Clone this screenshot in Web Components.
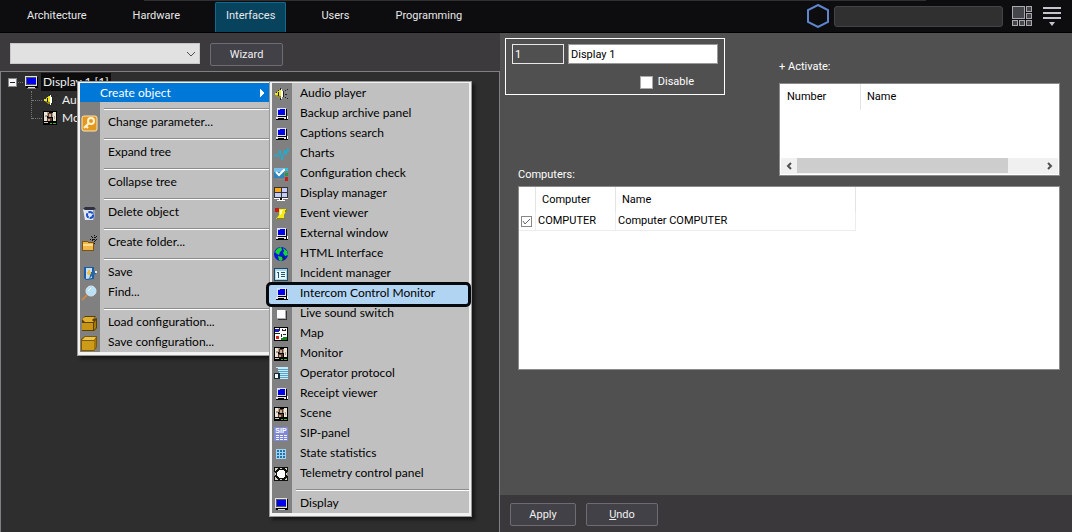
<!DOCTYPE html>
<html lang="en">
<head>
<meta charset="utf-8">
<title>Interfaces</title>
<style>
  html, body {
    height: 100%;
    margin: 0;
  }

  body {
    background: #505050;
    overflow: hidden;
  }
</style>
</head>
<body>
<settings-app></settings-app>

<script>
// 16x16 pixel icons, drawn in SVG user units
const pc = `
  <path fill="#e4e4f4" d="M4 2h9v8h-9zM3 11h10v2h-10z"/>
  <path fill="#0000e8" d="M5 3h7v6h-7z"/>
  <path fill="#9cf" d="M5 3h2v1h-2z"/>
  <path fill="#000" d="M13 3h1v8h-9v-1h8zM3 13h12v1h-12zM13 11h1v2h-1zM5 12h6v1h-6z"/>
  <path fill="#fff" d="M14 10h1v3h-1z"/>`;

const photo = `
  <path fill="#000" d="M1 1h14v14h-14z"/>
  <path fill="#ece4d4" d="M2 2h3v9h-3zM11 2h3v9h-3z"/>
  <path fill="#a8a090" d="M5 2h2v4h-2zM10 3h1v4h-1zM3 5h2v2h-2zM12 6h1v3h-1z"/>
  <path fill="#5c3a2c" d="M6 3h4v4h-4zM5 8h5v3h-5z"/>
  <path fill="#d0a890" d="M7 4h2v3h-2zM6 9h2v2h-2z"/>
  <path fill="#c8c8b8" d="M2 12h4v1h-4z"/>
  <path fill="#48b020" d="M8 13h2v1h-2zM11 13h3v1h-3z"/>`;

const icons = {
  pc,
  photo,
  display: `
    <path fill="#000" d="M3 3h12v11h-12z"/>
    <path fill="#e0e0ec" d="M2 2h12v10h-12z"/>
    <path fill="#555" d="M3 3h10v8h-10z"/>
    <path fill="#0000e8" d="M4 4h9v6h-9z"/>
    <path fill="#ddd" d="M5 13h7v1h-7z"/>
    <path fill="#777" d="M4 14h9v1h-9z"/>`,
  speaker: `
    <path fill="#eee820" d="M2 7h1l5-4v10l-5-4h-1z" shape-rendering="auto"/>
    <path fill="#88801c" d="M3 9l5 4v-3z" shape-rendering="auto"/>
    <path fill="#fff" d="M8 3h1v2h1v6h-1v2h-1z"/>
    <path fill="#222" d="M7 2h1v2h-1zM5 4h1v1h-1zM3 6h1v1h-1zM5 6h1v4h-1zM7 12h1v2h-1zM10 5h1v6h-1zM12 4h1v1h-1zM14 3h1v1h-1zM12 8h2v1h-2zM12 11h1v1h-1zM14 12h1v1h-1z"/>`,
  charts: `<path fill="none" stroke="#10b4e0" d="M1 11l2-3 2 3 2-7 2 10 3-10 1 5 2-7v4" shape-rendering="auto"/>`,
  check: `
    <path fill="#2a86bc" d="M1 2h10v10h-10z"/>
    <path fill="#73bde8" d="M1 2h10v4h-10z"/>
    <path fill="none" stroke="#fff" stroke-width="2" d="M3 6l3 3 6-6" shape-rendering="auto"/>
    <path fill="#20c8e8" d="M12 2h3v3h-3z"/>
    <path fill="#18a048" d="M12 7h3v3h-3z"/>
    <path fill="#c42020" d="M12 11h3v4h-3z"/>
    <path fill="#888" d="M4 13h7v1h-7z"/>`,
  wall: `
    <path fill="#333" d="M1 1h14v11h-14z"/>
    <path fill="#f8a818" d="M2 2h6v4h-6z"/>
    <path fill="#c4ccfc" d="M9 2h5v4h-5zM2 7h6v4h-6zM9 7h5v4h-5z"/>
    <path fill="#fff" d="M1 12h14v1h-14zM6 13h4v1h-4zM4 14h8v1h-8z"/>
    <path fill="#111" d="M7 12h2v2h-2z"/>`,
  scroll: `
    <path fill="#c81818" d="M2 2h4v4h-4z"/>
    <path fill="#f4ec10" d="M6 3h8l-3 6v4h-8l3-4z" shape-rendering="auto"/>
    <path fill="#8c8400" d="M13 3h1v3h-2zM4 12h8v1h-8z"/>
    <path fill="#fffcb0" d="M7 4h3l-2 5h-1z"/>`,
  globe: `
    <g shape-rendering="auto"><circle cx="8" cy="8" r="7" fill="#0818d8"/>
    <path fill="#18d830" d="M4 3l4-2 1 3-2 2-1 3-2-1-2-2zM10 2l4 3 1 4-3 1-2-3 1-2zM5 10l4 1 1 2-2 2-2-1z"/>
    <path fill="#0a2c20" d="M9 10l2 1 1 2-2 1z"/></g>`,
  incident: `
    <path fill="#20485c" d="M1 2h14v13h-14z"/>
    <path fill="#a8d4ec" d="M2 3h12v11h-12z"/>
    <path fill="#e8f8fc" d="M3 5h10v8h-10z"/>
    <path fill="#245468" d="M4 6h2v6h-1v-5h-1zM8 6h4v1h-4zM8 8h4v1h-4zM8 10h4v1h-4z"/>`,
  sound: `
    <path fill="#333" d="M5 5h9v9h-9z"/>
    <path fill="#fff" d="M4 4h8v8h-8z"/>
    <path fill="#aaa" d="M12 4h1v9h-9v-1h8z"/>`,
  map: `
    <path fill="#000" d="M1 1h14v14h-14z"/>
    <path fill="#fff" d="M2 2h12v12h-12z"/>
    <path fill="#1818d8" d="M2 3h4v3h-4z"/>
    <path fill="#e02020" d="M3 10h3v3h-3z"/>
    <path fill="#108020" d="M10 11h4v3h-6v-2h2z"/>
    <path fill="#222" d="M6 2h1v3h-1zM9 3h1v1h2v-1h1v2h-4zM2 7h5v1h-5zM8 8h1v3h-1zM10 8h3v1h-3z"/>`,
  protocol: `
    <path fill="#c4ecfc" d="M3 1h12v2h-10v-1h-2zM5 4h10v1h-10zM6 6h9v1h-9zM6 8h9v1h-9zM6 10h9v1h-9zM6 12h9v1h-9z"/>
    <path fill="#58a4c4" d="M5 3h10v1h-10zM6 5h9v1h-9zM6 7h9v1h-9zM6 9h9v1h-9zM6 11h9v1h-9z"/>
    <path fill="#102c3c" d="M1 7h6v6h-6z"/>
    <path fill="#fff" d="M2 8h3v4h-3z"/>`,
  sip: `
    <path fill="#8088d8" d="M1 1h14v14h-14z"/>
    <path fill="#f4f4ff" d="M3 9h3v1h-3zM7 9h3v1h-3zM11 9h3v1h-3zM3 11h3v1h-3zM7 11h3v1h-3zM11 11h3v1h-3zM3 13h3v1h-3zM7 13h3v1h-3zM11 13h3v1h-3z"/>
    <text x="8" y="7" fill="#fff" font-family="Liberation Sans, sans-serif" font-weight="bold" font-size="7" text-anchor="middle">SIP</text>`,
  stats: `
    <path fill="#a4d4f4" d="M3 3h10v10h-10z"/>
    <path fill="#2474ac" d="M4 4h2v2h-2zM7 4h2v2h-2zM10 4h2v2h-2zM4 7h2v2h-2zM7 7h2v2h-2zM10 7h2v2h-2zM4 10h2v2h-2zM7 10h2v2h-2zM10 10h2v2h-2z"/>`,
  telemetry: `
    <path fill="#111" d="M1 1h14v14h-14z"/>
    <path fill="#d8d8c0" d="M2 2h3l-3 3zM14 2h-3l3 3zM2 14h3l-3-3zM14 14h-3l3-3zM7 2h2v1h-2zM7 13h2v1h-2zM2 7h1v2h-1zM13 7h1v2h-1z"/>
    <path fill="#888" d="M1 6h1v4h-1zM14 6h1v4h-1z"/>
    <path fill="#fff" d="M6 4h4l2 2v4l-2 2h-4l-2-2v-4z"/>`,
  key: `
    <g shape-rendering="auto"><rect x="1" y="1" width="15" height="15" rx="2" fill="#e49820" stroke="#fbe3b0"/>
    <circle cx="10" cy="6" r="3" fill="none" stroke="#fff3d0" stroke-width="2"/>
    <path fill="none" stroke="#fff3d0" stroke-width="2" d="M8 8l-5 5M5 11l2 2"/></g>`,
  bin: `
    <g shape-rendering="auto"><path fill="#e4e8f0" d="M2 4h12l-1 11h-9z"/>
    <path fill="#303040" d="M2 4l2-2h9l2 2-2 1h-9z"/>
    <path fill="#989cac" d="M12 5h2l-1 10h-1z"/>
    <circle cx="9" cy="10" r="3" fill="none" stroke="#1450d0" stroke-width="2" stroke-dasharray="5 1"/></g>`,
  folder: `
    <path fill="#7c5410" d="M1 6h5l1 1h6v9h-12z"/>
    <path fill="#f0b848" d="M2 7h4l1 1h5v7h-10z"/>
    <path fill="#fcdc88" d="M2 9h10v2h-10z"/>
    <path stroke="#111" stroke-dasharray="1 1" d="M13 0v9M9 4h8M10 1l6 6M16 1l-6 6"/>`,
  save: `
    <g shape-rendering="auto"><path fill="#1c5ca4" d="M3 2h10v12l-8 1-2-2z"/>
    <path fill="#c4e0f8" d="M5 3h6v10l-6 1z"/>
    <path fill="#2868a8" d="M10 7l5-1v3l-4 2-3 3z"/>
    <path stroke="#f0c040" stroke-width="2" d="M8 5v5M6 8h4"/>
    <path fill="#e0e4ec" d="M14 6h2v2h-2z"/></g>`,
  find: `
    <g shape-rendering="auto"><path stroke="#c88848" stroke-width="2" d="M1 15l6-6"/>
    <circle cx="10" cy="6" r="5" fill="#b8e0f8" stroke="#d8e4ec"/>
    <path fill="none" stroke="#fff" d="M7 6l3-3"/></g>`,
  open: `
    <g shape-rendering="auto"><path fill="#5c4000" d="M1 4l3-3h11l-2 3 3-1v10l-3 3h-12z"/>
    <path fill="#c89414" d="M1 8h11v7h-11z"/>
    <path fill="#a87808" d="M13 8l2-3v8l-2 2z"/>
    <path fill="#e0b030" d="M1 4l3-2h10l-3 3 2 2h-9z"/></g>`,
  box: `
    <g shape-rendering="auto"><path fill="#7c5800" d="M0 4l4-3h12v11l-3 4h-13z"/>
    <path fill="#cc9c18" d="M1 6h12v9h-12z"/>
    <path fill="#e8c450" d="M1 5l3-3h11l-2 3z"/>
    <path fill="#a47808" d="M13 6l2-3v9l-2 3z"/></g>`,
  chevron: `<path fill="none" stroke="#505050" d="M4 6l4 4 4-4" shape-rendering="auto"/>`,
  left: `<path fill="none" stroke="#505050" stroke-width="2" d="M10 5l-3 3 3 3" shape-rendering="auto"/>`,
  right: `<path fill="none" stroke="#505050" stroke-width="2" d="M6 5l3 3-3 3" shape-rendering="auto"/>`,
  arrow: `<path fill="#fff" d="M7 4l4 4-4 4z"/>`,
};

function define(name, html, setup) {
  const template = document.createElement('template');
  template.innerHTML = html;

  customElements.define(name, class extends HTMLElement {
    connectedCallback() {
      if (this.shadowRoot) {
        return;
      }
      this.attachShadow({ mode: 'open' });
      this.shadowRoot.appendChild(template.content.cloneNode(true));
      if (setup) {
        setup(this, this.shadowRoot);
      }
    }
  });
}

function createIcon(name) {
  const icon = document.createElement('pixel-icon');
  icon.setAttribute('name', name);
  return icon;
}

define('pixel-icon', `
  <style>
    :host {
      display: block;
      flex: none;
      width: 16px;
      height: 16px;
    }

    svg {
      display: block;
      overflow: visible;
    }
  </style>
  <svg width="16" height="16" viewBox="0 0 16 16" shape-rendering="crispEdges" aria-hidden="true"></svg>
`, (host, root) => {
  root.querySelector('svg').innerHTML = icons[host.getAttribute('name')];
});

define('nav-tab', `
  <style>
    :host {
      display: flex;
    }

    button {
      padding: 0 10px 4px;
      border: 1px solid transparent;
      border-bottom: 0;
      border-radius: 2px 2px 0 0;
      background: none;
      color: #e8e8e8;
      font: inherit;
    }

    :host([active]) button {
      background: #08435e;
      border-color: #126a90;
    }
  </style>
  <button type="button"><slot></slot></button>
`);

define('app-header', `
  <style>
    :host {
      display: flex;
      align-items: stretch;
      justify-content: space-between;
      height: 33px;
      box-sizing: border-box;
      border-bottom: 1px solid #000;
      background: linear-gradient(#303033, #303033) 144px 0 / 782px 1px no-repeat #0d0d10;
    }

    nav {
      display: flex;
      gap: 24px;
      padding: 2px 0 0 16px;
    }

    .tools {
      display: flex;
      align-items: center;
      padding-right: 10px;
    }

    input {
      width: 169px;
      height: 21px;
      box-sizing: border-box;
      margin: 0 9px 0 5px;
      border: 1px solid #444448;
      border-radius: 3px;
      background: #303030;
      color: #ddd;
      font: inherit;
    }

    button {
      display: block;
      padding: 0;
      border: 0;
      background: none;
    }

    button + button {
      margin-left: 10px;
    }

    svg {
      display: block;
    }
  </style>
  <nav>
    <nav-tab>Architecture</nav-tab>
    <nav-tab>Hardware</nav-tab>
    <nav-tab active>Interfaces</nav-tab>
    <nav-tab>Users</nav-tab>
    <nav-tab>Programming</nav-tab>
  </nav>
  <div class="tools">
    <svg width="22" height="24" viewBox="0 0 22 24" fill="none" stroke="#5f86cc" stroke-width="2"><path d="M11 1l10 5v12l-10 5-10-5v-12z"/></svg>
    <input type="text" aria-label="Search">
    <button type="button" aria-label="Layout">
      <svg width="20" height="20" viewBox="0 0 20 20">
        <path fill="#a8a8ac" d="M0 0h13v13h-13zM14 0h6v6h-6zM14 7h6v6h-6zM0 14h6v6h-6zM7 14h6v6h-6zM14 14h6v6h-6z"/>
        <path fill="#45454c" d="M1 1h11v11h-11zM15 1h4v4h-4zM15 8h4v4h-4zM1 15h4v4h-4zM8 15h4v4h-4zM15 15h4v4h-4z"/>
      </svg>
    </button>
    <button type="button" aria-label="Menu">
      <svg width="20" height="20" viewBox="0 0 20 20" fill="#c4c4cc"><path d="M1 1h18v2h-18zM1 6h18v2h-18zM1 11h18v2h-18zM7 16h6l-3 4z"/></svg>
    </button>
  </div>
`);

define('push-button', `
  <style>
    :host {
      display: block;
    }

    button {
      width: 100%;
      height: 23px;
      padding: 0;
      border: 1px solid #6c6c72;
      border-radius: 2px;
      background: #424147;
      color: #f0f0f0;
      font: inherit;
    }
  </style>
  <button type="button"><slot></slot></button>
`);

define('tree-node', `
  <style>
    :host {
      display: block;
      color: #f0f0f0;
      font: 12px/18px Lato, sans-serif;
    }

    .row {
      display: flex;
      align-items: center;
      height: 18px;
    }

    .toggle {
      display: none;
      width: 9px;
      height: 9px;
      box-sizing: border-box;
      margin-right: 1px;
      padding: 0;
      border: 1px solid #888;
      background: linear-gradient(#223, #223) center / 5px 1px no-repeat #f4f4f4;
    }

    .line {
      width: 10px;
      border-top: 1px dotted #777;
    }

    .label {
      margin-left: 2px;
      padding: 0 2px;
      white-space: nowrap;
    }

    :host([open]) .toggle {
      display: block;
    }

    :host([open]) .line {
      width: 5px;
    }

    :host([open]) .label {
      background: #0c0c0c;
    }

    .children {
      height: 28px;
      margin-left: 23px;
      border-left: 1px dotted #777;
    }

    :host(:not([open])) .children {
      display: none;
    }
  </style>
  <div class="row">
    <button type="button" class="toggle" aria-label="Collapse"></button>
    <span class="line"></span>
    <span class="label"></span>
  </div>
  <div class="children"><slot></slot></div>
`, (host, root) => {
  const label = root.querySelector('.label');
  label.textContent = host.getAttribute('label');
  label.before(createIcon(host.getAttribute('icon')));
});

define('menu-item', `
  <style>
    :host {
      display: block;
      position: relative;
    }

    button {
      display: flex;
      width: 100%;
      height: 20px;
      padding: 0;
      border: 0;
      background: none;
      color: #000;
      font: inherit;
      text-align: left;
      white-space: nowrap;
    }

    pixel-icon {
      padding: 3px 3px 0 1px;
    }

    .label {
      flex: 1;
      padding-left: 8px;
    }

    .blank {
      width: 20px;
    }

    :host([expanded]) button {
      height: 19px;
      background: #0078d7;
      color: #fff;
    }

    :host([expanded]) .label {
      padding-left: 0;
    }

    :host([expanded]) pixel-icon {
      padding: 2px 0 0;
    }

    /* ring around the item reaches past the menu edges */
    :host([marked])::before {
      content: "";
      position: absolute;
      inset: -1px -2px -4px -6px;
      border: 3px solid #05080c;
      border-radius: 5px;
      background: #b0d4f2;
    }

    :host([marked]) button {
      position: relative;
    }
  </style>
  <button type="button" role="menuitem"><span class="label"><slot></slot></span></button>
`, (host, root) => {
  const button = root.querySelector('button');
  if (host.hasAttribute('icon')) {
    button.prepend(createIcon(host.getAttribute('icon')));
  } else {
    const blank = document.createElement('span');
    blank.className = 'blank';
    button.prepend(blank);
  }

  if (host.hasAttribute('expanded')) {
    button.append(createIcon('arrow'));
  }
});

define('menu-separator', `
  <style>
    :host {
      display: block;
      height: 10px;
      box-sizing: border-box;
      padding: 6px 0 0 24px;
    }

    div {
      height: 1px;
      border-top: 1px solid #8c8c8c;
      background: #fff;
    }
  </style>
  <div></div>
`);

define('popup-menu', `
  <style>
    :host {
      display: block;
      position: absolute;
      box-sizing: border-box;
      padding: 0 1px 2px 0;
      border: 1px solid #999;
      box-shadow: inset 0 0 0 2px #f2f2f2, 3px 3px 3px #181818;
      background: #f2f2f2;
      font: 12px/20px Lato, sans-serif;
    }

    div {
      margin: 1px 1px 1px 2px;
      background: linear-gradient(90deg, #808080 20px, #c0c0c0 20px);
    }
  </style>
  <div role="menu"><slot></slot></div>
`);

define('object-tree', `
  <style>
    :host {
      display: flex;
      flex-direction: column;
      position: relative;
      background: #3c3a3c;
    }

    .bar {
      display: flex;
      gap: 10px;
      padding: 10px 10px 5px;
    }

    .combo {
      display: grid;
      width: 190px;
      height: 21px;
    }

    .combo > * {
      grid-area: 1 / 1;
    }

    select {
      appearance: none;
      border: 1px solid #c8c8c8;
      background: #e1e1e1;
      font: inherit;
    }

    .combo pixel-icon {
      justify-self: end;
      align-self: center;
      margin-right: 1px;
      pointer-events: none;
    }

    push-button {
      width: 73px;
    }

    .tree {
      flex: 1;
      border: 1px solid #808084;
      border-bottom: 0;
      padding: 1px 0 0 7px;
      background: #2e2e2e;
    }

    .context {
      top: 48px;
      left: 77px;
      width: 195px;
    }

    .submenu {
      top: 48px;
      left: 269px;
      width: 203px;
    }
  </style>
  <div class="bar">
    <div class="combo">
      <select aria-label="Object type"><option></option></select>
      <pixel-icon name="chevron"></pixel-icon>
    </div>
    <push-button>Wizard</push-button>
  </div>
  <div class="tree">
    <tree-node open icon="display" label="Display 1 [1]">
      <tree-node icon="speaker" label="Au"></tree-node>
      <tree-node icon="photo" label="Mo"></tree-node>
    </tree-node>
  </div>
  <popup-menu class="context">
    <menu-item expanded>Create object</menu-item>
    <menu-separator></menu-separator>
    <menu-item icon="key">Change parameter...</menu-item>
    <menu-separator></menu-separator>
    <menu-item>Expand tree</menu-item>
    <menu-separator></menu-separator>
    <menu-item>Collapse tree</menu-item>
    <menu-separator></menu-separator>
    <menu-item icon="bin">Delete object</menu-item>
    <menu-separator></menu-separator>
    <menu-item icon="folder">Create folder...</menu-item>
    <menu-separator></menu-separator>
    <menu-item icon="save">Save</menu-item>
    <menu-item icon="find">Find...</menu-item>
    <menu-separator></menu-separator>
    <menu-item icon="open">Load configuration...</menu-item>
    <menu-item icon="box">Save configuration...</menu-item>
  </popup-menu>
  <popup-menu class="submenu">
    <menu-item icon="speaker">Audio player</menu-item>
    <menu-item icon="pc">Backup archive panel</menu-item>
    <menu-item icon="pc">Captions search</menu-item>
    <menu-item icon="charts">Charts</menu-item>
    <menu-item icon="check">Configuration check</menu-item>
    <menu-item icon="wall">Display manager</menu-item>
    <menu-item icon="scroll">Event viewer</menu-item>
    <menu-item icon="pc">External window</menu-item>
    <menu-item icon="globe">HTML Interface</menu-item>
    <menu-item icon="incident">Incident manager</menu-item>
    <menu-item icon="pc" marked>Intercom Control Monitor</menu-item>
    <menu-item icon="sound">Live sound switch</menu-item>
    <menu-item icon="map">Map</menu-item>
    <menu-item icon="photo">Monitor</menu-item>
    <menu-item icon="protocol">Operator protocol</menu-item>
    <menu-item icon="pc">Receipt viewer</menu-item>
    <menu-item icon="photo">Scene</menu-item>
    <menu-item icon="sip">SIP-panel</menu-item>
    <menu-item icon="stats">State statistics</menu-item>
    <menu-item icon="telemetry">Telemetry control panel</menu-item>
    <menu-separator></menu-separator>
    <menu-item icon="display">Display</menu-item>
  </popup-menu>
`);

define('list-box', `
  <style>
    :host {
      display: flex;
      flex-direction: column;
      justify-content: space-between;
      box-sizing: border-box;
      border: 1px solid #8a8a8a;
      background: #fff;
      color: #000;
    }

    .scroll {
      display: none;
      margin: 0 1px 1px;
      height: 16px;
      background: #f0f0f0;
    }

    :host([scroll]) .scroll {
      display: flex;
    }

    .track {
      flex: 1;
    }

    .thumb {
      width: 86%;
      height: 15px;
      background: #cdcdcd;
    }

    button {
      padding: 0;
      border: 0;
      background: none;
    }
  </style>
  <slot></slot>
  <div class="scroll">
    <button type="button" aria-label="Scroll left"><pixel-icon name="left"></pixel-icon></button>
    <div class="track"><div class="thumb"></div></div>
    <button type="button" aria-label="Scroll right"><pixel-icon name="right"></pixel-icon></button>
  </div>
`);

define('object-form', `
  <style>
    :host {
      display: flex;
      flex-direction: column;
      min-width: 0;
      background: #505050;
      color: #fff;
    }

    .top {
      display: grid;
      grid-template-columns: 1fr 281px;
      grid-template-rows: auto 1fr;
      padding: 5px 12px 4px 5px;
    }

    .identity {
      width: 220px;
      height: 57px;
      box-sizing: border-box;
      padding: 5px 6px;
      border: 1px solid #fff;
    }

    .fields {
      display: flex;
      gap: 4px;
    }

    .fields input {
      min-width: 0;
      height: 20px;
      box-sizing: border-box;
      padding: 0 2px;
      border: 1px solid #999;
      background: #fff;
      color: #000;
      font: inherit;
    }

    .fields .number {
      width: 52px;
      border-color: #e8e8e8;
      background: #505050;
      color: #fff;
    }

    .fields .name {
      flex: 1;
    }

    .disable {
      display: flex;
      align-items: center;
      justify-content: flex-end;
      gap: 5px;
      padding: 11px 24px 0 0;
    }

    input[type=checkbox] {
      appearance: none;
      display: block;
      width: 13px;
      height: 13px;
      margin: 0;
      border: 1px solid #aaa;
      background: #fff;
    }

    .activate {
      grid-area: 1 / 2 / 3 / 3;
      padding-top: 22px;
      padding-bottom: 6px;
    }

    .activate list-box {
      height: 93px;
      margin-top: 9px;
    }

    .heading {
      margin: 0;
      font: inherit;
      line-height: 14px;
    }

    .top > .heading {
      align-self: end;
      padding-left: 13px;
    }

    .computers {
      height: 184px;
      margin: 0 12px 0 18px;
    }

    table {
      width: 100%;
      border-collapse: separate;
      border-spacing: 0;
      table-layout: fixed;
    }

    th, td {
      box-sizing: border-box;
      padding: 0 0 0 6px;
      border-right: 1px solid #e4e4e4;
      font-weight: normal;
      text-align: left;
      white-space: nowrap;
    }

    th {
      height: 25px;
    }

    td {
      height: 19px;
      padding-left: 2px;
      border-color: #ececec;
      border-bottom: 1px solid #ececec;
    }

    .computers table {
      width: 337px;
    }

    .activate th {
      height: 26px;
      padding-left: 7px;
    }

    .activate th:last-child {
      padding-left: 6px;
      border: 0;
    }

    td input[type=checkbox] {
      width: 11px;
      height: 11px;
      box-sizing: border-box;
      border-color: #888;
    }

    .tick {
      display: grid;
      width: 11px;
    }

    .tick > * {
      grid-area: 1 / 1;
    }

    .tick svg {
      pointer-events: none;
    }

    .actions {
      display: flex;
      gap: 10px;
      margin-top: auto;
      padding: 8px 10px 6px;
      background: #3a383a;
    }

    .apply {
      width: 66px;
    }

    .undo {
      width: 72px;
    }
  </style>
  <div class="top">
    <div class="identity">
      <div class="fields">
        <input class="number" type="text" value="1" readonly aria-label="Number">
        <input class="name" type="text" value="Display 1" aria-label="Name">
      </div>
      <label class="disable"><input type="checkbox">Disable</label>
    </div>
    <div class="activate">
      <h2 class="heading">+ Activate:</h2>
      <list-box scroll>
        <table>
          <colgroup><col style="width: 81px"><col></colgroup>
          <tr><th>Number</th><th>Name</th></tr>
        </table>
      </list-box>
    </div>
    <h2 class="heading">Computers:</h2>
  </div>
  <list-box class="computers">
    <table>
      <colgroup><col style="width: 17px"><col style="width: 80px"><col></colgroup>
      <tr><th></th><th>Computer</th><th>Name</th></tr>
      <tr>
        <td>
          <span class="tick">
            <input type="checkbox" checked aria-label="COMPUTER">
            <svg width="11" height="11" viewBox="0 0 11 11" fill="none" stroke="#666"><path d="M2 5l2 3 5-5"/></svg>
          </span>
        </td>
        <td>COMPUTER</td>
        <td>Computer COMPUTER</td>
      </tr>
    </table>
  </list-box>
  <div class="actions">
    <push-button class="apply">Apply</push-button>
    <push-button class="undo"><u>U</u>ndo</push-button>
  </div>
`);

define('settings-app', `
  <style>
    :host {
      display: flex;
      flex-direction: column;
      height: 100vh;
      font: 11px/14px Roboto, sans-serif;
    }

    main {
      display: grid;
      flex: 1;
      grid-template-columns: 500px 1fr;
    }
  </style>
  <app-header></app-header>
  <main>
    <object-tree></object-tree>
    <object-form></object-form>
  </main>
`);
</script>
</body>
</html>
